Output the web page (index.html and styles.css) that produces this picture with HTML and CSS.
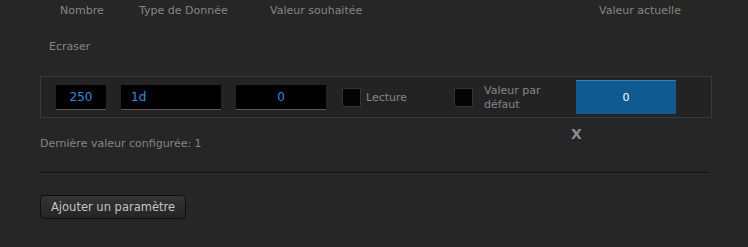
FILE: index.html
```html
<!DOCTYPE html>
<html lang="fr">
<head>
    <meta charset="UTF-8">
    <title>Paramètres</title>
    <link rel="stylesheet" href="styles.css">
</head>
<body>
    <div id="params">
        <div class="head">
            <span class="h-nombre">Nombre</span>
            <span class="h-type">Type de Donnée</span>
            <span class="h-souhaitee">Valeur souhaitée</span>
            <span class="h-actuelle">Valeur actuelle</span>
        </div>
        <div class="head2">Ecraser</div>

        <div class="param-row">
            <input class="in-nombre" type="text" value="250">
            <input class="in-type" type="text" value="1d">
            <input class="in-val" type="text" value="0">
            <span class="check"></span>
            <span class="lbl">Lecture</span>
            <span class="check check2"></span>
            <span class="lbl lbl2">Valeur par<br>défaut</span>
            <div class="actual">0</div>
        </div>
        <div class="remove">X</div>
        <div class="last">Dernière valeur configurée: 1</div>

        <div class="sep"></div>

        <button class="add">Ajouter un paramètre</button>
    </div>
</body>
</html>
```

FILE: styles.css
```css
body {
    margin: 0;
    background-color: #262626;
    font-family: "DejaVu Sans", Verdana, sans-serif;
    font-size: 11px;
    color: #858585;
}
#params {
    padding-left: 40px;
    width: 672px;
}
.head {
    display: flex;
    height: 21px;
    line-height: 21px;
}
.h-nombre {
    width: 99px;
    padding-left: 20px;
    box-sizing: border-box;
}
.h-type {
    width: 131px;
}
.h-souhaitee {
    width: 329px;
}
.head2 {
    padding-left: 9px;
    margin-top: 16px;
    line-height: 20px;
}
.param-row {
    display: flex;
    align-items: center;
    margin-top: 19px;
    height: 40px;
    border: 1px solid #3a3a3a;
    background-color: #232323;
    padding-left: 15px;
}
.param-row input {
    height: 25px;
    box-sizing: border-box;
    margin: 0 15px 0 0;
    border: 0;
    border-bottom: 1px solid #5a5a5a;
    background-color: #000;
    color: #2b8ee6;
    font-family: inherit;
    font-size: 12px;
    padding: 0;
}
.in-nombre {
    width: 50px;
    text-align: center;
}
.in-type {
    width: 100px;
    padding-left: 10px !important;
}
.in-val {
    width: 90px;
    text-align: center;
}
.check {
    width: 19px;
    height: 19px;
    box-sizing: border-box;
    background-color: #050505;
    border: 1px solid #333;
    margin-left: 1px;
}
.lbl {
    margin-left: 5px;
    width: 87px;
    font-size: 11px;
    color: #858585;
}
.lbl2 {
    margin-left: 11px;
    width: 92px;
    line-height: 14px;
    margin-top: 1px;
}
.actual {
    width: 100px;
    height: 34px;
    box-sizing: border-box;
    border-top: 1px solid #2a86c8;
    background-color: #105a92;
    color: #fff;
    text-align: center;
    line-height: 33px;
    font-size: 11px;
}
.remove {
    margin-left: 531px;
    font-weight: bold;
    font-size: 14px;
    line-height: 14px;
    height: 12px;
    margin-top: 9px;
    color: #8c8c8c;
}
.last {
    margin-top: -2px;
    line-height: 14px;
}
.sep {
    margin-top: 21px;
    width: 669px;
    border-top: 1px solid #101010;
    border-bottom: 1px solid #2c2c2c;
}
.add {
    margin-top: 21px;
    height: 24px;
    padding: 0 10px;
    border: 1px solid #0e0e0e;
    border-radius: 4px;
    background: linear-gradient(#343434, #242424);
    color: #c4c4c4;
    font-family: inherit;
    font-size: 11.5px;
}
```
